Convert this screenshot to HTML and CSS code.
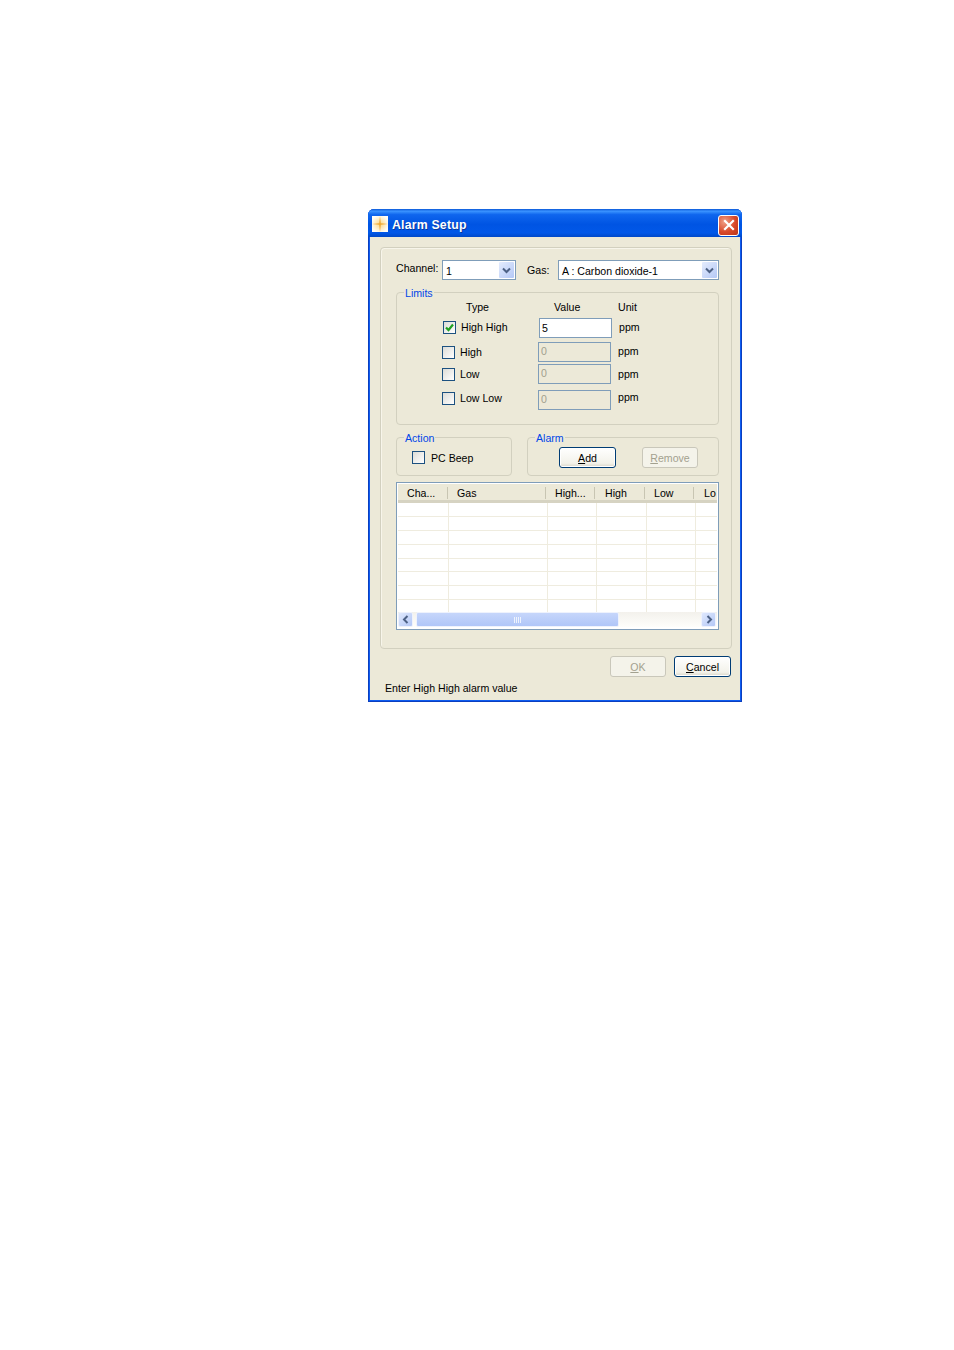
FILE: index.html
```html
<!DOCTYPE html>
<html lang="en">
<head>
<meta charset="utf-8">
<title>Alarm Setup</title>
<link rel="stylesheet" href="styles.css">
</head>
<body>
<div class="window">
  <div class="titlebar">
    <svg class="app-icon" width="16" height="16" viewBox="0 0 16 16"><defs><radialGradient id="glow" cx="0.5" cy="0.5" r="0.55"><stop offset="0" stop-color="#fbd98a"/><stop offset="1" stop-color="#fffdf6"/></radialGradient></defs><rect width="16" height="16" fill="url(#glow)"/><path d="M8 0 L8.8 7.2 L16 8 L8.8 8.8 L8 16 L7.2 8.8 L0 8 L7.2 7.2 Z" fill="#f0a830"/></svg>
    <span class="title">Alarm Setup</span>
    <button class="close" aria-label="Close"><svg width="12" height="12" viewBox="0 0 12 12"><path d="M2 2 L10 10 M10 2 L2 10" stroke="#fff" stroke-width="2.2" stroke-linecap="square"/></svg></button>
  </div>
  <div class="client">
    <div class="panel">
      <div class="top-row">
        <span class="lbl lbl-channel">Channel:</span>
        <div class="combo combo-channel"><span>1</span><span class="drop"><svg width="9" height="7" viewBox="0 0 9 7"><path d="M1 1.5 L4.5 5 L8 1.5" fill="none" stroke="#4d6185" stroke-width="2"/></svg></span></div>
        <span class="lbl lbl-gas">Gas:</span>
        <div class="combo combo-gas"><span>A : Carbon dioxide-1</span><span class="drop"><svg width="9" height="7" viewBox="0 0 9 7"><path d="M1 1.5 L4.5 5 L8 1.5" fill="none" stroke="#4d6185" stroke-width="2"/></svg></span></div>
      </div>

      <div class="group limits">
        <span class="legend">Limits</span>
        <div class="limit-head"><span class="h-type">Type</span><span class="h-value">Value</span><span class="h-unit">Unit</span></div>
        <div class="limit-row r-hh">
          <label class="check check-first"><span class="box"><svg width="11" height="11" viewBox="0 0 11 11"><path d="M2 5.5 L4.5 8 L9 2.5" fill="none" stroke="#21a121" stroke-width="2.2"/></svg></span><span>High High</span></label>
          <div class="input active">5</div>
          <span class="unit unit-first">ppm</span>
        </div>
        <div class="limit-row r-h">
          <label class="check"><span class="box"></span><span>High</span></label>
          <div class="input">0</div>
          <span class="unit">ppm</span>
        </div>
        <div class="limit-row r-l">
          <label class="check"><span class="box"></span><span>Low</span></label>
          <div class="input">0</div>
          <span class="unit">ppm</span>
        </div>
        <div class="limit-row r-ll">
          <label class="check"><span class="box"></span><span>Low Low</span></label>
          <div class="input">0</div>
          <span class="unit">ppm</span>
        </div>
      </div>

      <div class="mid-row">
        <div class="group action">
          <span class="legend">Action</span>
          <label class="check"><span class="box"></span><span>PC Beep</span></label>
        </div>
        <div class="group alarm">
          <span class="legend">Alarm</span>
          <button class="btn default btn-add"><u>A</u>dd</button>
          <button class="btn disabled btn-remove"><u>R</u>emove</button>
        </div>
      </div>

      <div class="list">
        <div class="list-head">
          <span>Cha...</span><span>Gas</span><span>High...</span><span>High</span><span>Low</span><span>Lo</span>
        </div>
        <div class="list-body">
          <div class="list-row"><i></i><i></i><i></i><i></i><i></i><i></i></div>
          <div class="list-row"><i></i><i></i><i></i><i></i><i></i><i></i></div>
          <div class="list-row"><i></i><i></i><i></i><i></i><i></i><i></i></div>
          <div class="list-row"><i></i><i></i><i></i><i></i><i></i><i></i></div>
          <div class="list-row"><i></i><i></i><i></i><i></i><i></i><i></i></div>
          <div class="list-row"><i></i><i></i><i></i><i></i><i></i><i></i></div>
          <div class="list-row"><i></i><i></i><i></i><i></i><i></i><i></i></div>
          <div class="list-row last"><i></i><i></i><i></i><i></i><i></i><i></i></div>
        </div>
        <div class="scrollbar">
          <span class="sb-btn"><svg width="8" height="9" viewBox="0 0 8 9"><path d="M5.5 1 L2 4.5 L5.5 8" fill="none" stroke="#4d6185" stroke-width="2"/></svg></span>
          <span class="sb-thumb"><svg width="7" height="6" viewBox="0 0 7 6"><path d="M0.5 0V6M2.5 0V6M4.5 0V6M6.5 0V6" stroke="#eef3fd" stroke-width="1"/></svg></span>
          <span class="sb-track"></span>
          <span class="sb-btn sb-end"><svg width="8" height="9" viewBox="0 0 8 9"><path d="M2.5 1 L6 4.5 L2.5 8" fill="none" stroke="#4d6185" stroke-width="2"/></svg></span>
        </div>
      </div>
    </div>
    <div class="bottom-row">
      <button class="btn disabled btn-ok"><u>O</u>K</button>
      <button class="btn default btn-cancel"><u>C</u>ancel</button>
    </div>
    <div class="status">Enter High High alarm value</div>
  </div>
</div>
</body>
</html>
```
FILE: styles.css
```css
* { box-sizing: border-box; }
html, body { margin: 0; padding: 0; background: #fff; }
body { height: 1350px; font-family: "Liberation Sans", Arial, sans-serif; font-size: 10.6px; color: #000; }

.window {
  width: 374px; height: 493px;
  margin: 209px 0 0 368px;
  background: #0d5cf0;
  border-radius: 6px 6px 0 0;
  box-shadow: inset 1px 0 0 #0a3fc0, inset -1px 0 0 #0a3fc0, inset 0 -1px 0 #0a3fc0;
  display: flex; flex-direction: column;
  padding: 0 2px 2px 2px;
}
.titlebar {
  height: 28px; flex: none;
  margin: 0 -2px;
  padding: 2px 3px 0 4px;
  display: flex; align-items: center;
  border-radius: 6px 6px 0 0;
  background: linear-gradient(180deg, #0a58d8 0%, #3a93ff 8%, #0f66ee 20%, #0054e3 55%, #0158e8 85%, #0049c8 100%);
}
.app-icon { flex: none; }
.title {
  margin-left: 4px; margin-top: 2px;
  color: #fff; font-weight: bold; font-size: 12.3px; letter-spacing: 0.2px;
  text-shadow: 1px 1px 0 #0a3a9e;
}
.close {
  margin-left: auto; margin-top: 2px;
  width: 21px; height: 21px; padding: 0;
  border: 1px solid #fff; border-radius: 3px;
  background: radial-gradient(circle at 30% 30%, #f0a088, #d8492a 55%, #b8341a);
  display: flex; align-items: center; justify-content: center;
}

.client {
  flex: 1;
  background: #ece9d8;
  padding: 10px 8px 0 10px;
  display: flex; flex-direction: column;
}
.panel {
  height: 402px;
  border: 1px solid #d2d0bf;
  border-radius: 4px;
  box-shadow: inset 1px 1px 0 #f7f5ea;
  padding: 11px 12px 0 15px;
}
.top-row { display: flex; align-items: center; height: 22px; }
.lbl { display: block; }
.lbl-channel { width: 46px; margin-top: -4px; }
.lbl-gas { margin-left: 11px; width: 31px; margin-top: -1px; }
.combo {
  height: 20px; background: #fff;
  border: 1px solid #7f9db9;
  display: flex; align-items: center; justify-content: space-between;
  padding: 1px 1px 0 3px;
}
.combo-channel { width: 74px; }
.combo-gas { width: 161px; }
.drop {
  width: 15px; height: 16px; margin-top: -1px;
  background: linear-gradient(135deg, #e4ecfd, #b4c8f6);
  border-radius: 1px;
  display: flex; align-items: center; justify-content: center;
}

.group {
  position: relative;
  border: 1px solid #d2d0bf;
  border-radius: 4px;
}
.legend {
  position: absolute; top: -6px; left: 7px;
  padding: 0 1px; line-height: 13px;
  background: #ece9d8; color: #0046e8;
}
.limits { height: 133px; margin-top: 11px; padding: 7px 0 0 0; }
.limit-head { display: grid; grid-template-columns: 157px 64px auto; height: 14px; line-height: 14px; }
.h-type { padding-left: 69px; }
.limit-row {
  display: grid; grid-template-columns: 141px 73px auto; align-items: center;
  height: 20px;
}
.r-hh { margin-top: 4px; }
.r-h { margin-top: 4px; }
.r-l { margin-top: 2px; }
.r-ll { margin-top: 6px; }
.r-l .unit { margin-top: 0; }
.r-ll .unit { margin-top: -6px; }
.r-ll .check { margin-top: -4px; }
.check { display: flex; align-items: center; gap: 5px; padding-left: 45px; }
.check-first { padding-left: 46px; margin-top: -2px; }
.box {
  width: 13px; height: 13px; flex: none;
  border: 1px solid #1c5180;
  background: linear-gradient(135deg, #dcdcd7, #fff);
  display: flex; align-items: center; justify-content: center;
}
.input {
  height: 20px; line-height: 17px; padding-left: 2px;
  border: 1px solid #7f9db9; color: #a2a08e;
}
.input.active { background: #fff; color: #000; line-height: 18px; margin-left: 1px; margin-right: -1px; }
.unit { padding-left: 7px; margin-top: -2px; }
.unit-first { margin-left: 1px; }

.mid-row { display: flex; gap: 15px; margin-top: 12px; }
.action { width: 116px; height: 39px; padding-top: 13px; }
.action .check { padding-left: 15px; gap: 6px; }
.alarm { width: 192px; height: 39px; display: flex; align-items: flex-start; padding: 9px 0 0 31px; }

.btn {
  height: 21px; padding: 0; font: inherit; border-radius: 3px; text-align: center;
}
.btn.default {
  color: #000; border: 1px solid #003c74;
  background: linear-gradient(180deg, #fff, #f3f2ea 80%, #d8d5c8);
  box-shadow: inset 0 0 0 1px #fff;
}
.btn.disabled {
  color: #a3a18f; border: 1px solid #c9c7ba;
  background: #f4f3ea;
}
.btn-add { width: 57px; }
.btn-remove { width: 56px; margin-left: 26px; }

.list {
  margin-top: 6px;
  width: 323px; height: 148px;
  border: 1px solid #7f9db9;
  background: #fff;
  padding: 1px;
  display: flex; flex-direction: column;
}
.list-head {
  height: 19px; flex: none;
  display: grid; grid-template-columns: 50px 98px 49px 50px 49px 23px;
  background: #ece9d8;
  border-bottom: 3px solid #d6d3c2;
  overflow: hidden;
}
.list-head span { padding-left: 9px; border-right: 1px solid #c8c5b2; height: 12px; line-height: 12px; margin-top: 3px; }
.list-head span:nth-child(4), .list-head span:last-child { padding-left: 10px; }
.list-head span:last-child { border-right: 0; white-space: nowrap; overflow: hidden; }
.list-body { flex: none; height: 109px; overflow: hidden; }
.list-row {
  height: 13.9px;
  display: grid; grid-template-columns: 51px 99px 49px 50px 49px 21px;
  border-bottom: 1px solid #efecdf;
}
.list-row.last { border-bottom: 0; }
.list-row i { border-right: 1px solid #efecdf; }
.list-row i:last-child { border-right: 0; }
.scrollbar {
  height: 15px; flex: none; display: flex;
  background: linear-gradient(180deg, #f3f1ec, #fefefb);
}
.sb-btn {
  width: 15px; flex: none; border: 1px solid #eef2fd; border-radius: 2px;
  background: linear-gradient(135deg, #dfe8fd, #b4c8f6);
  display: flex; align-items: center; justify-content: center;
}
.sb-end { margin-right: 1px; }
.sb-thumb {
  width: 203px; flex: none; margin-left: 3px;
  border: 1px solid #eef2fd; border-radius: 2px;
  background: linear-gradient(180deg, #c6d6fb, #b0c6f8);
  display: flex; align-items: center; justify-content: center;
}
.sb-track { flex: 1; }

.bottom-row { display: flex; justify-content: flex-end; gap: 8px; margin-top: 7px; padding-right: 1px; }
.btn-ok { width: 56px; }
.btn-cancel { width: 57px; }
.status { margin-top: 5px; margin-left: 5px; line-height: 13px; }
```
